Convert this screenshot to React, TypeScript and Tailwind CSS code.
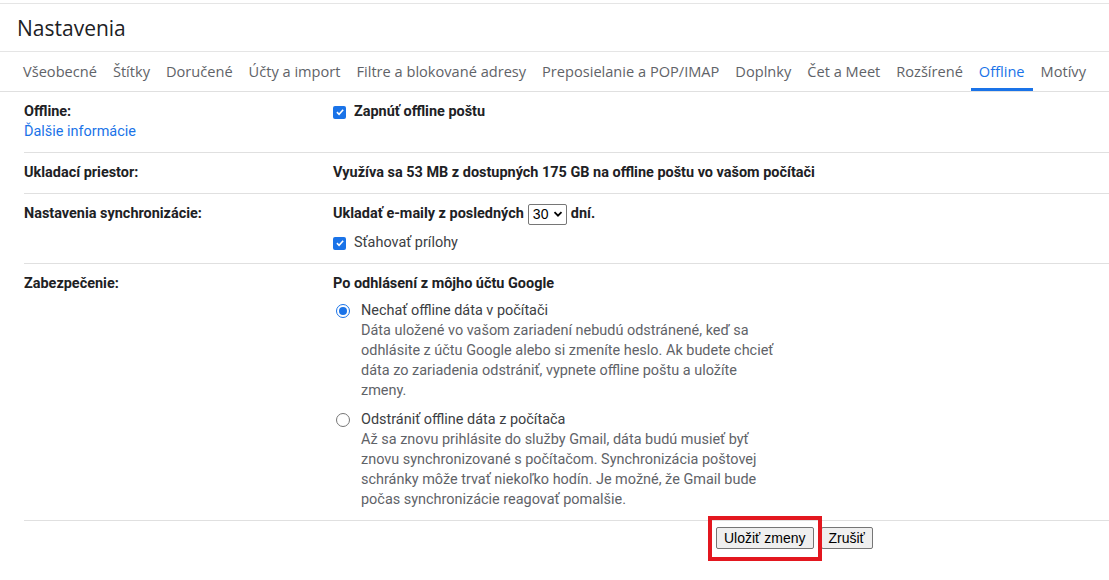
import React from "react";

const tabs = [
  "Všeobecné",
  "Štítky",
  "Doručené",
  "Účty a import",
  "Filtre a blokované adresy",
  "Preposielanie a POP/IMAP",
  "Doplnky",
  "Čet a Meet",
  "Rozšírené",
  "Offline",
  "Motívy",
];

function Checkbox() {
  return (
    <span className="flex h-[13px] w-[13px] shrink-0 items-center justify-center rounded-[2px] bg-[#1a73e8]">
      <svg viewBox="0 0 12 12" className="h-[10px] w-[10px]">
        <path d="M2.3 6.2 L4.9 8.7 L9.8 3.4" fill="none" stroke="#fff" strokeWidth="1.9" />
      </svg>
    </span>
  );
}

function Radio({ checked }: { checked?: boolean }) {
  return checked ? (
    <span className="flex h-[14px] w-[14px] shrink-0 items-center justify-center rounded-full border border-[#1a73e8] bg-white">
      <span className="h-[8px] w-[8px] rounded-full bg-[#1a73e8]" />
    </span>
  ) : (
    <span className="block h-[14px] w-[14px] shrink-0 rounded-full border border-[#767676] bg-white" />
  );
}

function Row({ label, children }: { label: React.ReactNode; children: React.ReactNode }) {
  return (
    <div className="flex border-b border-[#e0e0e0] pb-[10px] pt-[10px]">
      <div className="w-[309px] shrink-0 font-bold text-[#202124]">{label}</div>
      <div className="flex-1">{children}</div>
    </div>
  );
}

export default function App() {
  return (
    <div className="h-[580px] w-[1109px] overflow-hidden bg-white font-['Roboto',sans-serif] text-[14.45px] leading-[20px]">
      <div className="h-[3px]" />
      <div className="flex h-[49px] items-center border-y border-[#e5e5e5] pl-[17px] font-['Open_Sans',sans-serif] text-[21px] text-[#202124]">
        Nastavenia
      </div>
      <div className="flex h-[40px] items-stretch border-b border-[#e0e0e0] pl-[15px] font-['Open_Sans',sans-serif] text-[14.6px]">
        {tabs.map((t) => {
          const active = t === "Offline";
          return (
            <div
              key={t}
              className={`flex items-center whitespace-nowrap border-b-[3px] px-[8px] pt-[1px] ${
                active ? "border-[#1a73e8] text-[#1a73e8]" : "border-transparent text-[#5f6368]"
              }`}
            >
              {t}
            </div>
          );
        })}
      </div>

      <div className="pl-[24px]">
        <Row
          label={
            <>
              <div>Offline:</div>
              <div className="font-normal text-[#1a73e8]">Ďalšie informácie</div>
            </>
          }
        >
          <div className="flex items-center gap-[8px] font-bold text-[#202124]">
            <Checkbox />
            Zapnúť offline poštu
          </div>
        </Row>

        <Row label="Ukladací priestor:">
          <div className="font-bold text-[#202124]">
            Využíva sa 53 MB z dostupných 175 GB na offline poštu vo vašom počítači
          </div>
        </Row>

        <Row label="Nastavenia synchronizácie:">
          <div className="flex h-[20px] items-center font-bold text-[#202124]">
            Ukladať e-maily z posledných
            <span className="mx-[4px] flex h-[21px] w-[39px] items-center justify-between rounded-[2px] border border-[#767676] pl-[4px] pr-[3px] font-['Liberation_Sans',sans-serif] text-[14px] font-normal text-black">
              30
              <svg viewBox="0 0 10 10" className="h-[10px] w-[10px]">
                <path d="M1.5 3.2 L5 6.7 L8.5 3.2" fill="none" stroke="#000" strokeWidth="1.8" />
              </svg>
            </span>
            dní.
          </div>
          <div className="mt-[9px] flex items-center gap-[8px] text-[#3c4043]">
            <Checkbox />
            Sťahovať prílohy
          </div>
        </Row>

        <Row label="Zabezpečenie:">
          <div className="font-bold text-[#202124]">Po odhlásení z môjho účtu Google</div>
          <div className="mt-[7px] flex gap-[11px] pl-[3px]">
            <div className="pt-[3px]">
              <Radio checked />
            </div>
            <div className="max-w-[420px] text-[#5f6368]">
              <div className="text-[#3c4043]">Nechať offline dáta v počítači</div>
              Dáta uložené vo vašom zariadení nebudú odstránené, keď sa odhlásite z účtu Google alebo si zmeníte
              heslo. Ak budete chcieť dáta zo zariadenia odstrániť, vypnete offline poštu a uložíte zmeny.
            </div>
          </div>
          <div className="mt-[9px] flex gap-[11px] pl-[3px]">
            <div className="pt-[3px]">
              <Radio />
            </div>
            <div className="max-w-[420px] text-[#5f6368]">
              <div className="text-[#3c4043]">Odstrániť offline dáta z počítača</div>
              Až sa znovu prihlásite do služby Gmail, dáta budú musieť byť znovu synchronizované s počítačom.
              Synchronizácia poštovej schránky môže trvať niekoľko hodín. Je možné, že Gmail bude počas
              synchronizácie reagovať pomalšie.
            </div>
          </div>
        </Row>
      </div>

      <div className="relative mt-[6px] flex gap-[7px] pl-[716px] font-['Liberation_Sans',sans-serif] text-[14px] text-black">
        <button className="h-[22px] rounded-[2px] border border-[#767676] bg-[#efefef] px-[7px] leading-[18px]">
          Uložiť zmeny
        </button>
        <button className="h-[22px] rounded-[2px] border border-[#767676] bg-[#efefef] px-[7px] leading-[18px]">
          Zrušiť
        </button>
        <div className="pointer-events-none absolute left-[708px] top-[-11px] h-[45px] w-[114px] border-[4px] border-[#e3171f]" />
      </div>
    </div>
  );
}
